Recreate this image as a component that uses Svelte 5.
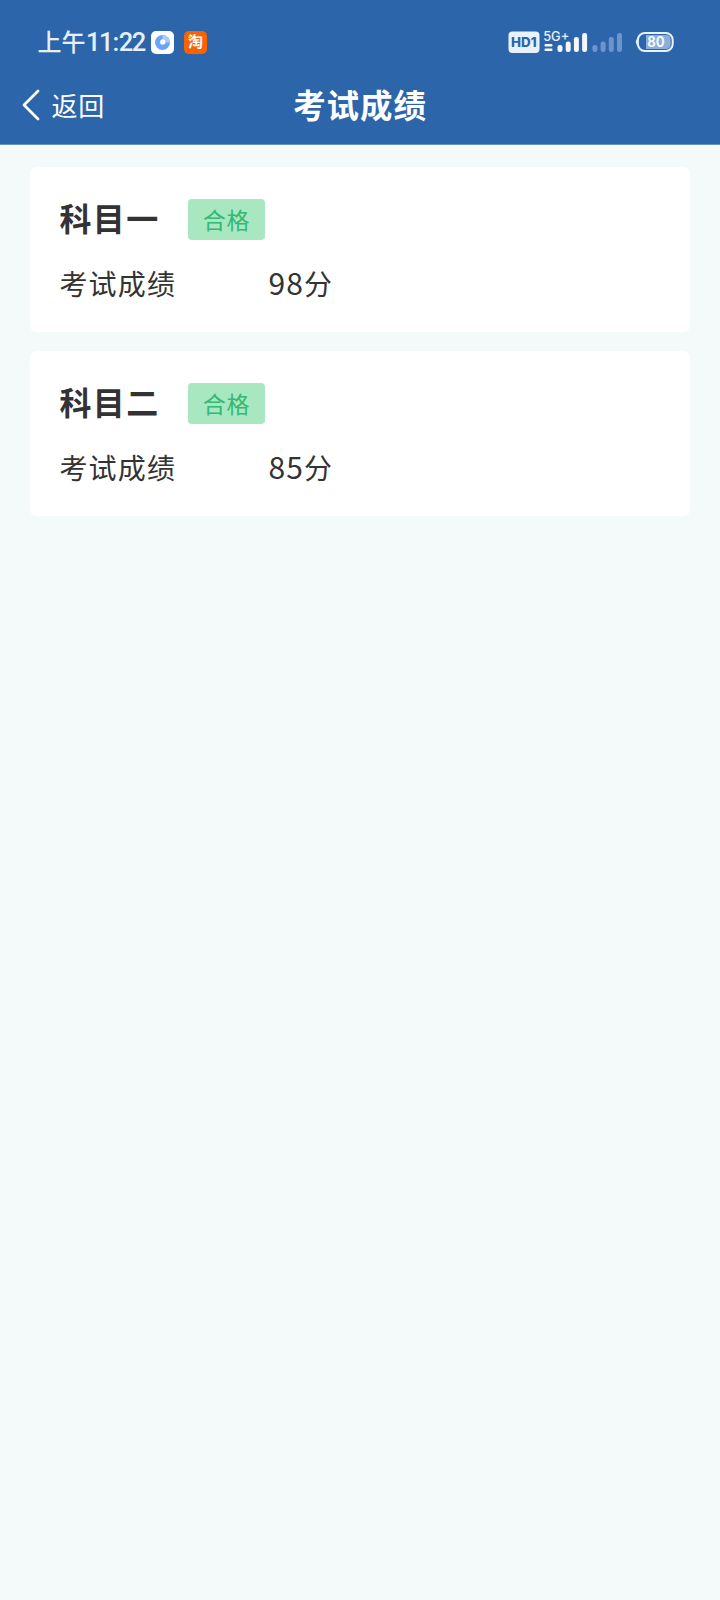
<script>
  const results = [
    { subject: '科目一', status: '合格', score: 98 },
    { subject: '科目二', status: '合格', score: 85 }
  ];
  const bars = [6, 10.5, 15, 19];
</script>

<div class="screen">
  <header>
    <div class="statusbar">
      <span class="time"><span class="half">上午</span><span class="clock">11<span class="colon">:</span>22</span></span>
      <svg class="app" width="23" height="23" viewBox="0 0 23 23">
        <rect width="23" height="23" rx="5" fill="#fff" />
        <circle cx="11.5" cy="11.5" r="7.5" fill="#69a5f7" />
        <path d="M11.5 4a7.5 7.5 0 0 1 7.5 7.5h-7.5z" fill="#a9ccfb" />
        <circle cx="11.8" cy="11" r="2.7" fill="#fff" />
      </svg>
      <svg class="app taobao" width="23" height="23" viewBox="0 0 23 23">
        <rect width="23" height="23" rx="5" fill="#fb6204" />
        <text x="11.6" y="16.4" text-anchor="middle" font-size="15" font-weight="700" fill="#fff">淘</text>
        <circle cx="5.6" cy="6.2" r="1.4" fill="#ffc21c" />
      </svg>
      <span class="space"></span>
      <svg class="signals" width="166" height="28" viewBox="0 -2 166 28">
        <rect x="0.5" y="1.5" width="31" height="21.5" rx="4" fill="#e9f1fb" />
        <text class="latin" x="15.8" y="17" text-anchor="middle" font-size="13" font-weight="800" textLength="25.5" lengthAdjust="spacingAndGlyphs" fill="#2c65a9">HD1</text>
        <text class="latin" x="35.2" y="10.8" font-size="13" font-weight="500" textLength="26" lengthAdjust="spacingAndGlyphs" fill="#e9f1fb">5G+</text>
        <g fill="#f4f8fd">
          <rect x="36.5" y="14" width="8" height="2.4" rx="1" />
          <rect x="36.5" y="18.4" width="8" height="2.6" rx="1" />
          {#each bars as h, i}
            <rect x={49.5 + i * 8.2} y={22 - h - (i === 0 ? 1 : 0)} width="5" height={h + (i === 0 ? 1 : 0)} rx="2.2" />
          {/each}
        </g>
        <g fill="#6c96cb">
          {#each bars as h, i}
            <rect x={84.4 + i * 8.2} y={22 - h - (i === 0 ? 1 : 0)} width="5" height={h + (i === 0 ? 1 : 0)} rx="2.2" />
          {/each}
        </g>
        <path d="M130 8.3q-3.5 3.7 0 7.4z" fill="#e9f1fb" stroke="#e9f1fb" stroke-width="1" />
        <rect x="129.9" y="3" width="34.8" height="18" rx="7" fill="#2c65a9" stroke="#e9f1fb" stroke-width="2" />
        <path d="M138 5h20q4.7 0 4.7 5v4q0 5-4.7 5h-20z" fill="#8caed8" />
        <text class="latin" x="148" y="17" text-anchor="middle" font-size="14" font-weight="700" textLength="17.5" lengthAdjust="spacingAndGlyphs" fill="#f2f7fd">80</text>
      </svg>
    </div>
    <nav>
      <button class="back">
        <svg width="18" height="32" viewBox="0 0 18 32" fill="none" stroke="#fff" stroke-width="2.8" stroke-linecap="round" stroke-linejoin="round">
          <path d="M16 2 2 16l14 14" />
        </svg>
        <span>返回</span>
      </button>
      <h1>考试成绩</h1>
      <span></span>
    </nav>
  </header>
  <main>
    {#each results as r}
      <section>
        <div class="top">
          <h2>{r.subject}</h2>
          <span class="badge">{r.status}</span>
        </div>
        <div class="line">
          <span class="label">考试成绩</span>
          <span class="value"><span class="num">{r.score}</span>分</span>
        </div>
      </section>
    {/each}
  </main>
</div>

<style>
  :global(body) {
    background: #f4f9fa;
  }
  .screen {
    min-height: 1600px;
    background: #f4f9fa;
    color: #333;
    font-family: 'Noto Sans CJK SC', sans-serif;
  }
  header {
    box-sizing: border-box;
    height: 145px;
    background: #2c65a9;
    border-bottom: 1px solid #6891bb;
    color: #fff;
  }
  .statusbar {
    box-sizing: border-box;
    height: 84px;
    padding: 0 46px 0 37.5px;
    display: flex;
    align-items: center;
  }
  .time {
    display: flex;
    align-items: baseline;
    width: 113px;
    padding-bottom: 1px;
    font-size: 24px;
    font-weight: 500;
    line-height: 30px;
    color: #e6f0fb;
    white-space: nowrap;
  }
  .half {
    width: 48.5px;
  }
  .clock {
    font-family: Roboto, sans-serif;
    font-size: 25.5px;
    letter-spacing: -1.5px;
  }
  .colon {
    margin: 0 1px 0 0.6px;
  }
  .app {
    flex: none;
  }
  .taobao {
    margin-left: 10.5px;
  }
  .space {
    flex: 1;
  }
  .signals {
    overflow: visible;
  }
  svg text {
    font-family: 'Noto Sans CJK SC', sans-serif;
  }
  svg text.latin {
    font-family: Inter, sans-serif;
  }
  nav {
    display: grid;
    grid-template-columns: 1fr auto 1fr;
    align-items: center;
    height: 42px;
    padding: 0 22px;
  }
  .back {
    display: flex;
    align-items: center;
    gap: 11.6px;
    padding: 0;
    border: 0;
    background: none;
    color: #fff;
    font-family: inherit;
    font-size: 26px;
    line-height: 38px;
    letter-spacing: 0.7px;
  }
  .back span {
    padding-bottom: 1px;
  }
  h1 {
    margin: 0;
    padding-bottom: 2px;
    font-size: 32.5px;
    font-weight: 700;
    line-height: 38px;
    letter-spacing: 0.9px;
  }
  main {
    display: flex;
    flex-direction: column;
    gap: 19px;
    padding: 21.7px 29.6px;
  }
  section {
    box-sizing: border-box;
    height: 165px;
    padding: 31.6px 29.8px;
    border-radius: 6px;
    background: #fff;
  }
  .top {
    display: flex;
    align-items: center;
    height: 42px;
  }
  h2 {
    margin: 0;
    width: 128.3px;
    padding-bottom: 3px;
    font-size: 32px;
    font-weight: 700;
    line-height: 39px;
    letter-spacing: 1.4px;
  }
  .badge {
    width: 77.5px;
    height: 41px;
    border-radius: 4px;
    background: #a9e7c0;
    color: #31b977;
    font-size: 23px;
    line-height: 40px;
    letter-spacing: 0.7px;
    text-align: center;
  }
  .line {
    display: flex;
    align-items: baseline;
    margin-top: 21.4px;
    font-size: 28px;
    line-height: 40px;
    letter-spacing: 1.2px;
  }
  .label {
    width: 209px;
  }
  .num {
    font-size: 30px;
    letter-spacing: 1.1px;
  }
</style>
